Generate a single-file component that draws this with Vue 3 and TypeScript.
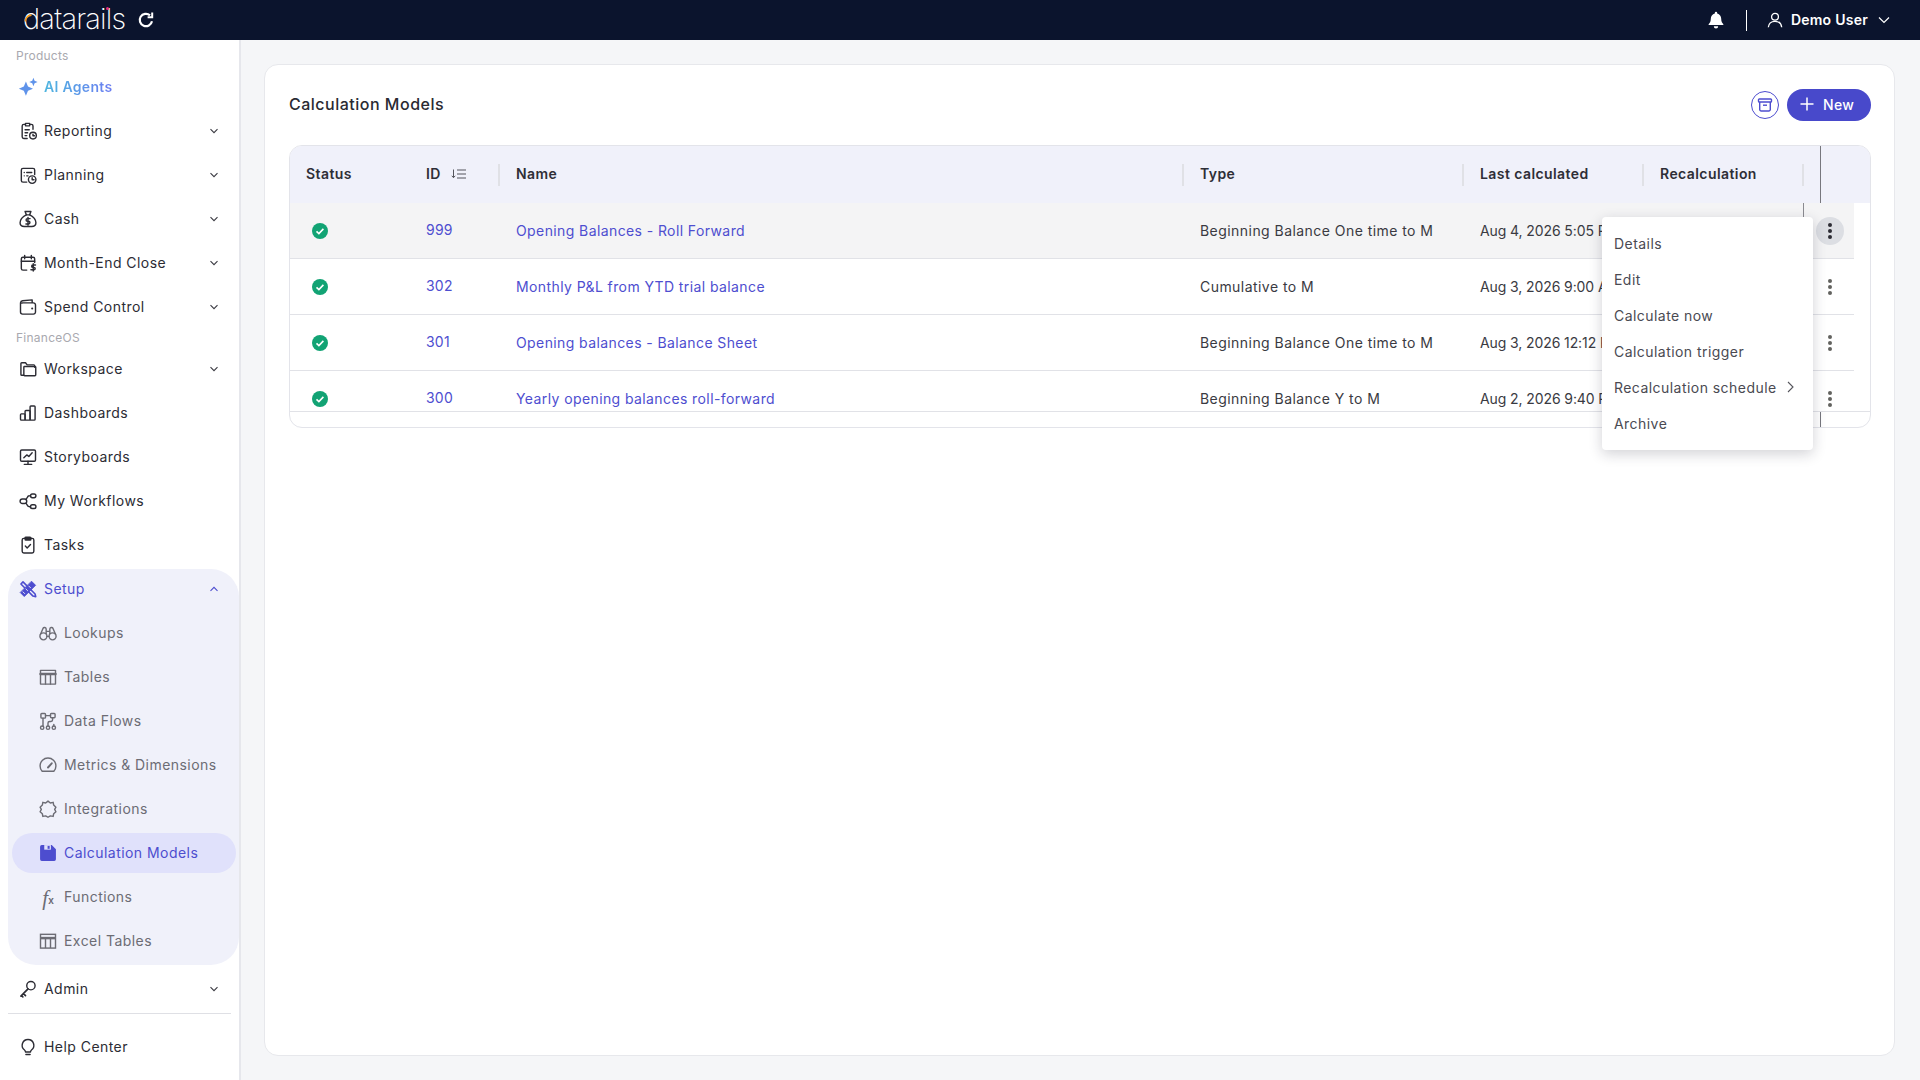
<script setup lang="ts">
interface NavItem {
  label: string;
  icon: string;
  chevron?: boolean;
}

const icons: Record<string, string> = {
  reporting: '<path d="M8 4H7a2 2 0 0 0-2 2v13a2 2 0 0 0 2 2h4"/><path d="M9 2.8h5v3H9z"/><path d="M15 4h1a2 2 0 0 1 2 2v4"/><path d="M8.5 10.5h5M8.5 14h3M8.5 17.5h2"/><circle cx="18" cy="17.5" r="4"/><path d="M18 15.8v1.9h1.8"/>',
  planning: '<path d="M10.500 20.500H6a2 2 0 0 1-2-2V6a2 2 0 0 1 2-2h12a2 2 0 0 1 2 2v5.500"/><path d="M7.500 9h.01M10.500 9h6M7.500 13h.01M10.500 13h1.500"/><circle cx="17" cy="17.500" r="4.500"/><path d="M17 15.200v2.500h2.200"/>',
  cash: '<path d="M8.500 3h7l-1.500 4h-4z"/><path d="M10 7c-4 2-7.500 6-7.500 9.500 0 3 2.500 4.500 5 4.500h9c2.500 0 5-1.500 5-4.500C21.500 13 18 9 14 7"/><path d="M14.500 11.500h-3.200a1.600 1.600 0 0 0 0 3.200h1.400a1.600 1.600 0 0 1 0 3.200H9.500M12 10v9.500"/>',
  close: '<path d="M10.500 20.500H6a2 2 0 0 1-2-2V7a2 2 0 0 1 2-2h12a2 2 0 0 1 2 2v4.500"/><path d="M4 10h16M8 2.800v4M16 2.800v4"/><path d="M21 14.500h-3.200a1.400 1.400 0 0 0 0 2.800h1.400a1.400 1.400 0 0 1 0 2.800H15.500M18.300 13v8.500"/>',
  spend: '<path d="M3 7v11a2.500 2.500 0 0 0 2.500 2.500h13A2.500 2.500 0 0 0 21 18V9.500A2.500 2.500 0 0 0 18.500 7h-13A2.500 2.500 0 0 1 3 7a3 3 0 0 1 2.500-2.500L17 3.500V7"/><path d="M17 13.800h.01" stroke-width="2.500"/>',
  workspace: '<path d="M7 19.500H4.500a1 1 0 0 1-1-1V5.500a1 1 0 0 1 1-1H9l2 2.500h8a1 1 0 0 1 1 1v2"/><path d="M7 11V9.800a.8.8 0 0 1 .8-.8h12.700a.8.8 0 0 1 .8.800V19a1 1 0 0 1-1 1H8a1 1 0 0 1-1-1z"/>',
  dashboards: '<rect x="3" y="13" width="5.500" height="7.500" rx="1"/><rect x="8.500" y="9" width="6" height="11.500" rx="1"/><rect x="14.500" y="3.500" width="6" height="17" rx="1"/>',
  storyboards: '<rect x="3" y="3.500" width="18" height="13.500" rx="1.500"/><path d="M12 17v3.500M7.500 20.800h9"/><path d="M7 13l3.500-3.500 2.500 1.800L17 7"/>',
  workflows: '<rect x="2.500" y="9.500" width="8" height="5.500" rx="2.700"/><rect x="15" y="3.500" width="6.500" height="4.500" rx="2.200"/><rect x="15" y="16.500" width="6.500" height="4.500" rx="2.200"/><path d="M15 5.800h-1.500a2 2 0 0 0-2 1.500l-1.800 2.400M15 18.800h-1.500a2.500 2.500 0 0 1-2-1.300l-1.800-2.700"/>',
  tasks: '<rect x="5" y="4" width="14" height="17.500" rx="2"/><rect x="8.500" y="2.500" width="7" height="3.500" rx="1" fill="currentColor"/><path d="M8.800 13.300l2.200 2.200 4-4.200"/>',
  setup: '<path d="M3.500 6L6 3.500 20.500 18l.8 3.300-3.300-.8z" stroke-width="1.900"/><path d="M16.500 3l4.500 4.500L7.500 21 3 16.500z" fill="currentColor" stroke-width="1.200"/><path d="M6 15.500l2 2M9.500 12l2 2M13 8.500l2 2" stroke="#f0f1fa" stroke-width="1.100"/>',
  lookups: '<circle cx="6.500" cy="16" r="4.200"/><circle cx="17.500" cy="16" r="4.200"/><path d="M10.700 16h2.600M3 13.500L6 6.500a2 2 0 0 1 3.800.8V13M21 13.500l-3-7a2 2 0 0 0-3.800.8V13M9.800 10h4.400"/>',
  tables: '<rect x="3" y="4" width="18" height="16.500"/><path d="M3 8.500h18" stroke-width="3"/><path d="M9 9v11.500M15 9v11.500"/>',
  flows: '<rect x="3.500" y="3" width="5.500" height="5.500" rx="1"/><rect x="15" y="3" width="5.500" height="5" rx="1"/><circle cx="5" cy="20" r="2"/><circle cx="12" cy="20" r="2"/><circle cx="19" cy="20" r="2"/><path d="M6 8.500V18M9 5.500h6M17.500 8v2.500a2 2 0 0 1-2 2h-1.500A2 2 0 0 0 12 14.500V18M19 18v-2"/>',
  metrics: '<path d="M5 19.500a9.500 9.500 0 1 1 14 0z"/><path d="M12 15l4.500-5" stroke-width="2.300"/>',
  integrations: '<path d="M12 2.500l2.800 2.300 3.400-.8.600 3.300 2.700 2.500-1.500 2.700 1.500 2.800-2.700 2.400-.6 3.200-3.400-.6L12 21.900l-2.800-1.600-3.400.6-.6-3.200-2.700-2.400 1.500-2.800-1.500-2.700 2.700-2.500.6-3.300 3.400.8z"/>',
  admin: '<circle cx="15.500" cy="8" r="5"/><path d="M12 11.800L3.500 20.500M6.500 17.500l2.500 2.500M4 20l1.800 1.500" stroke-width="2"/>',
  help: '<path d="M12 3a7 7 0 0 0-4.200 12.600c.8.600 1.200 1.300 1.200 2.400h6c0-1.100.400-1.800 1.200-2.400A7 7 0 0 0 12 3z"/><path d="M9.500 21h5"/>',
};

const products: NavItem[] = [
  { label: "Reporting", icon: "reporting", chevron: true },
  { label: "Planning", icon: "planning", chevron: true },
  { label: "Cash", icon: "cash", chevron: true },
  { label: "Month-End Close", icon: "close", chevron: true },
  { label: "Spend Control", icon: "spend", chevron: true },
];

const finance: NavItem[] = [
  { label: "Workspace", icon: "workspace", chevron: true },
  { label: "Dashboards", icon: "dashboards" },
  { label: "Storyboards", icon: "storyboards" },
  { label: "My Workflows", icon: "workflows" },
  { label: "Tasks", icon: "tasks" },
];

const setupBefore: NavItem[] = [
  { label: "Lookups", icon: "lookups" },
  { label: "Tables", icon: "tables" },
  { label: "Data Flows", icon: "flows" },
  { label: "Metrics & Dimensions", icon: "metrics" },
  { label: "Integrations", icon: "integrations" },
];

const models = [
  { id: 999, name: "Opening Balances - Roll Forward", type: "Beginning Balance One time to M", date: "Aug 4, 2026 5:05 PM" },
  { id: 302, name: "Monthly P&L from YTD trial balance", type: "Cumulative to M", date: "Aug 3, 2026 9:00 AM" },
  { id: 301, name: "Opening balances - Balance Sheet", type: "Beginning Balance One time to M", date: "Aug 3, 2026 12:12 PM" },
  { id: 300, name: "Yearly opening balances roll-forward", type: "Beginning Balance Y to M", date: "Aug 2, 2026 9:40 PM" },
];

const menuItems = ["Details", "Edit", "Calculate now", "Calculation trigger", "Recalculation schedule", "Archive"];
</script>

<template>
  <div class="app">
    <header class="topbar">
      <div class="logo">
        <span class="logo-word">datarails</span>
        <svg class="logo-arc" width="9" height="10" viewBox="0 0 9 10" fill="none">
          <path d="M7.500 1.200A6.500 6.500 0 0 0 1.200 7.500" stroke="#f39a1f" stroke-width="1.700" />
        </svg>
        <span class="logo-dot"></span>
        <svg class="logo-refresh" width="18" height="18" viewBox="0 0 18 18" fill="none" stroke="#fff" stroke-width="2.200">
          <path d="M15 10.300A6.200 6.200 0 1 1 13 4.300" />
          <path d="M15.200 1.600v4.600h-4.600" stroke-width="2" />
        </svg>
      </div>
      <div class="top-right">
        <svg class="bell" width="16" height="18" viewBox="0 0 16 18" fill="#fff">
          <path d="M8 0.800a1.200 1.200 0 0 1 1.200 1.200v.5c2.500.6 4 2.700 4 5.200 0 2.800.8 4 2 5.200.4.400.2 1.100-.5 1.100H1.300c-.7 0-.9-.7-.5-1.100 1.200-1.200 2-2.400 2-5.200 0-2.500 1.500-4.600 4-5.200V2A1.200 1.200 0 0 1 8 .8z" />
          <path d="M5.800 15.200h4.400a2.200 2.200 0 0 1-4.400 0z" />
        </svg>
        <span class="top-divider"></span>
        <svg width="16" height="16" viewBox="0 0 16 16" fill="none" stroke="#fff" stroke-width="1.300">
          <circle cx="8" cy="4.800" r="3.400" />
          <path d="M1.300 15.300c.4-3.800 3.100-6 6.700-6s6.300 2.200 6.700 6" />
        </svg>
        <span class="user-name">Demo User</span>
        <svg width="12" height="8" viewBox="0 0 12 8" fill="none" stroke="#fff" stroke-width="1.200">
          <path d="M1 1.500l5 5 5-5" />
        </svg>
      </div>
    </header>

    <div class="body">
      <aside class="sidebar">
        <div class="section-label first">Products</div>
        <a class="nav-row ai">
          <svg class="nav-icon" viewBox="0 0 24 24" fill="#5f93ea">
            <path d="M9.500 5.500l2.500 6 6 2.500-6 2.500-2.500 6-2.500-6-6-2.500 6-2.500z" />
            <path d="M18.500 1l1.400 3.600 3.600 1.400-3.600 1.400-1.400 3.600-1.400-3.600-3.600-1.400 3.600-1.400z" />
          </svg>
          <span class="ai-text">AI Agents</span>
        </a>
        <a v-for="item in products" :key="item.label" class="nav-row">
          <svg class="nav-icon" viewBox="0 0 24 24" fill="none" stroke="currentColor" stroke-width="1.700" stroke-linecap="round" stroke-linejoin="round" v-html="icons[item.icon]"></svg>
          <span class="nav-text">{{ item.label }}</span>
          <svg v-if="item.chevron" class="chev" width="10" height="6" viewBox="0 0 10 6" fill="none" stroke="currentColor" stroke-width="1.100"><path d="M1.500 1.200L5 4.700l3.500-3.500" /></svg>
        </a>

        <div class="section-label">FinanceOS</div>
        <a v-for="item in finance" :key="item.label" class="nav-row">
          <svg class="nav-icon" viewBox="0 0 24 24" fill="none" stroke="currentColor" stroke-width="1.700" stroke-linecap="round" stroke-linejoin="round" v-html="icons[item.icon]"></svg>
          <span class="nav-text">{{ item.label }}</span>
          <svg v-if="item.chevron" class="chev" width="10" height="6" viewBox="0 0 10 6" fill="none" stroke="currentColor" stroke-width="1.100"><path d="M1.500 1.200L5 4.700l3.500-3.500" /></svg>
        </a>

        <div class="setup-group">
          <a class="nav-row setup-head">
            <svg class="nav-icon" viewBox="0 0 24 24" fill="none" stroke="currentColor" stroke-width="1.700" stroke-linecap="round" stroke-linejoin="round" v-html="icons.setup"></svg>
            <span class="nav-text">Setup</span>
            <svg class="chev" width="10" height="6" viewBox="0 0 10 6" fill="none" stroke="currentColor" stroke-width="1.100"><path d="M1.500 4.800L5 1.300l3.500 3.500" /></svg>
          </a>
          <a v-for="item in setupBefore" :key="item.label" class="nav-row sub">
            <svg class="nav-icon" viewBox="0 0 24 24" fill="none" stroke="currentColor" stroke-width="1.700" stroke-linecap="round" stroke-linejoin="round" v-html="icons[item.icon]"></svg>
            <span class="nav-text">{{ item.label }}</span>
          </a>
          <a class="nav-row sub active">
            <svg class="nav-icon" viewBox="0 0 24 24" fill="currentColor">
              <path d="M4.500 2.500h12l5 5v12a2 2 0 0 1-2 2h-15a2 2 0 0 1-2-2v-15a2 2 0 0 1 2-2z" />
              <path d="M7.500 2.500h8v5.500h-8z" fill="#e0e1fb" />
              <path d="M11.500 3.500h2.500v3.500h-2.500z" />
            </svg>
            <span class="nav-text">Calculation Models</span>
          </a>
          <a class="nav-row sub">
            <span class="fx-icon"><i>f</i><b>x</b></span>
            <span class="nav-text">Functions</span>
          </a>
          <a class="nav-row sub">
            <svg class="nav-icon" viewBox="0 0 24 24" fill="none" stroke="currentColor" stroke-width="1.700" v-html="icons.tables"></svg>
            <span class="nav-text">Excel Tables</span>
          </a>
        </div>

        <a class="nav-row admin">
          <svg class="nav-icon" viewBox="0 0 24 24" fill="none" stroke="currentColor" stroke-width="1.700" stroke-linecap="round" stroke-linejoin="round" v-html="icons.admin"></svg>
          <span class="nav-text">Admin</span>
          <svg class="chev" width="10" height="6" viewBox="0 0 10 6" fill="none" stroke="currentColor" stroke-width="1.100"><path d="M1.500 1.200L5 4.700l3.500-3.500" /></svg>
        </a>
        <div class="side-rule"></div>
        <a class="nav-row">
          <svg class="nav-icon" viewBox="0 0 24 24" fill="none" stroke="currentColor" stroke-width="1.700" stroke-linecap="round" stroke-linejoin="round" v-html="icons.help"></svg>
          <span class="nav-text">Help Center</span>
        </a>
      </aside>

      <main class="main">
        <section class="card">
          <div class="card-head">
            <h1>Calculation Models</h1>
            <div class="actions">
              <button class="archive-btn">
                <svg width="16" height="16" viewBox="0 0 16 16" fill="none" stroke="#4c4ccf" stroke-width="1.400" stroke-linejoin="round">
                  <rect x="1.500" y="2" width="13" height="3" rx="0.800" />
                  <path d="M2.700 5v7.500a1.500 1.500 0 0 0 1.500 1.500h7.600a1.500 1.500 0 0 0 1.500-1.500V5" />
                  <path d="M6 8.200h4" />
                </svg>
              </button>
              <button class="new-btn">
                <svg width="14" height="14" viewBox="0 0 14 14" fill="none" stroke="#fff" stroke-width="1.500"><path d="M7 0.500v13M0.500 7h13" /></svg>
                New
              </button>
            </div>
          </div>

          <div class="table">
            <div class="grid-row head">
              <div class="th">Status</div>
              <div class="th sep">
                ID
                <svg class="sort" width="15" height="10" viewBox="0 0 15 10" fill="none" stroke="#55555c" stroke-width="1">
                  <path d="M2.500 0.500v8M0.800 6.800l1.700 1.900 1.700-1.900" />
                  <path d="M6 1h9M6 5h9M6 9h9" />
                </svg>
              </div>
              <div class="th sep">Name</div>
              <div class="th sep">Type</div>
              <div class="th sep">Last calculated</div>
              <div class="th sep">Recalculation</div>
              <div class="th-end"></div>
            </div>

            <div class="rows">
              <div v-for="(row, i) in models" :key="row.id" class="grid-row row" :class="{ hover: i === 0 }">
                <div class="td status">
                  <svg width="16" height="16" viewBox="0 0 16 16">
                    <circle cx="8" cy="8" r="8" fill="#12a374" />
                    <path d="M4.500 8.300l2.400 2.300 4.500-4.700" fill="none" stroke="#fff" stroke-width="1.600" />
                  </svg>
                </div>
                <div class="td link id">{{ row.id }}</div>
                <div class="td link">{{ row.name }}</div>
                <div class="td">{{ row.type }}</div>
                <div class="td date">{{ row.date }}</div>
                <div class="td recalc"></div>
                <div class="td kebab">
                  <span class="dots" :class="{ open: i === 0 }"><i></i><i></i><i></i></span>
                </div>
              </div>
            </div>

            <div class="scroll-strip"><span></span></div>
          </div>

          <ul class="menu">
            <li v-for="item in menuItems" :key="item">
              {{ item }}
              <svg v-if="item === 'Recalculation schedule'" width="7" height="12" viewBox="0 0 7 12" fill="none" stroke="#55555c" stroke-width="1.100"><path d="M1 1l5 5-5 5" /></svg>
            </li>
          </ul>
        </section>
      </main>
    </div>
  </div>
</template>

<style>
html, body {
  margin: 0;
  background: #f5f6f8;
}
</style>

<style scoped>
.app {
  width: 1920px;
  height: 1080px;
  display: flex;
  flex-direction: column;
  overflow: hidden;
  font-family: Inter, "Noto Sans", sans-serif;
  font-size: 14px;
  letter-spacing: 0.45px;
  color: #2c2c34;
}

.topbar {
  height: 40px;
  flex: none;
  background: #0b142d;
  display: flex;
  align-items: center;
  justify-content: space-between;
  padding: 0 30px 0 23px;
  color: #fff;
}
.logo {
  position: relative;
  display: flex;
  align-items: center;
}
.logo-word {
  font-weight: 200;
  font-size: 29px;
  letter-spacing: -0.8px;
  line-height: 40px;
  width: 107px;
  margin-top: -2px;
}
.logo-arc {
  position: absolute;
  left: 1px;
  top: 13px;
}
.logo-dot {
  position: absolute;
  left: 83px;
  top: 6px;
  width: 3px;
  height: 3px;
  border-radius: 50%;
  background: #e6287c;
}
.logo-refresh {
  margin-left: 7px;
}
.top-right {
  display: flex;
  align-items: center;
}
.top-divider {
  width: 1px;
  height: 21px;
  background: #fff;
  margin: 0 20px 0 22px;
}
.user-name {
  font-weight: 600;
  font-size: 14px;
  letter-spacing: 0.25px;
  margin: 0 10px 1px 8px;
}

.body {
  flex: 1;
  display: flex;
  min-height: 0;
}

.sidebar {
  width: 239px;
  flex: none;
  box-sizing: content-box;
  background: #fff;
  border-right: 2px solid #e6e7ec;
  padding-top: 4px;
}
.section-label {
  height: 18px;
  line-height: 18px;
  padding-left: 16px;
  font-size: 12px;
  letter-spacing: 0.25px;
  color: #a9a9af;
}
.section-label.first {
  height: 21px;
  line-height: 23px;
}
.nav-row {
  height: 44px;
  display: flex;
  align-items: center;
  padding-left: 20px;
  color: #2c2c34;
}
.nav-icon {
  width: 20px;
  height: 20px;
  flex: none;
  overflow: visible;
  margin-left: -2px;
}
.nav-text {
  margin: 0 0 1px 6px;
  flex: 1;
}
.chev {
  margin-right: 20px;
  color: #3a3a42;
}
.ai .ai-text {
  margin: 0 0 1px 6px;
  font-weight: 600;
  letter-spacing: 0.3px;
  background: linear-gradient(90deg, #4fb6df, #6b7df2);
  -webkit-background-clip: text;
  background-clip: text;
  color: transparent;
}
.setup-group {
  margin: 2px 0 2px 8px;
  padding-bottom: 2px;
  background: #f0f1fa;
  border-radius: 28px;
}
.setup-head {
  height: 40px;
  margin-bottom: 2px;
  padding-left: 12px;
  color: #4d4dcf;
}
.setup-head .chev {
  color: #4d4dcf;
  margin-right: 20px;
}
.nav-row.sub {
  padding-left: 32px;
  color: #6c6c74;
}
.nav-row.active {
  position: relative;
  color: #4d4dcf;
}
.nav-row.active::before {
  content: "";
  position: absolute;
  left: 4px;
  right: 3px;
  top: 2px;
  bottom: 2px;
  border-radius: 20px;
  background: #e0e1fb;
}
.nav-row.active > * {
  position: relative;
}
.fx-icon {
  width: 18px;
  height: 20px;
  margin: 0 0 0 -1px;
  display: flex;
  align-items: flex-end;
  justify-content: center;
  font-family: "Liberation Serif", serif;
  line-height: 18px;
  letter-spacing: 0;
}
.fx-icon i {
  font-size: 21px;
}
.fx-icon b {
  font-size: 10px;
  line-height: 13px;
  font-family: "Liberation Sans", sans-serif;
}
.fx-icon + .nav-text {
  margin-left: 7px;
}
.side-rule {
  height: 1px;
  margin: 2px 8px 11px;
  background: #dfe0e5;
}

.main {
  flex: 1;
  min-width: 0;
  padding: 24px 25px 24px 23px;
  display: flex;
}
.card {
  position: relative;
  flex: 1;
  box-sizing: border-box;
  background: #fff;
  border: 1px solid #e7e8ec;
  border-radius: 14px;
  padding: 24px 23px 24px 24px;
}
.card-head {
  display: flex;
  align-items: center;
  justify-content: space-between;
  height: 32px;
  margin-bottom: 24px;
}
.card-head h1 {
  margin: 0 0 2px;
  font-size: 16px;
  font-weight: 500;
  letter-spacing: 0.5px;
  color: #2a2a32;
}
.actions {
  display: flex;
  align-items: center;
  gap: 8px;
}
.archive-btn {
  width: 28px;
  height: 28px;
  padding: 0;
  display: flex;
  align-items: center;
  justify-content: center;
  background: #fff;
  border: 1px solid #4c4ccf;
  border-radius: 50%;
}
.new-btn {
  width: 84px;
  height: 32px;
  padding: 0 0 2px 13px;
  display: flex;
  align-items: center;
  gap: 9px;
  background: #4849cb;
  border: 0;
  border-radius: 16px;
  color: #fff;
  font-family: inherit;
  font-size: 14px;
  font-weight: 500;
  letter-spacing: 0.3px;
}

.table {
  border: 1px solid #e3e4ea;
  border-radius: 13px;
  overflow: hidden;
  height: 283px;
  box-sizing: border-box;
}
.grid-row {
  display: grid;
  grid-template-columns: 120px 90px 684px 280px 180px 160px 50px;
}
.head {
  height: 57px;
  background: #f0f1fa;
  grid-template-columns: 120px 90px 684px 280px 180px 160px 1fr;
}
.th {
  position: relative;
  display: flex;
  align-items: center;
  padding: 0 0 2px 16px;
  font-weight: 600;
  font-size: 14px;
  letter-spacing: 0.42px;
  color: #2e2e36;
}
.th.sep::after {
  content: "";
  position: absolute;
  right: 0;
  top: 18px;
  width: 2px;
  height: 22px;
  background: #e0e1e6;
}
.sort {
  margin-left: 10px;
}
.th-end {
  margin-left: 16px;
  border-left: 1px solid #77777d;
}
.rows {
  height: 208px;
  overflow: hidden;
  border-bottom: 1px solid #e1e2e7;
  box-sizing: content-box;
}
.row {
  width: 1564px;
  height: 56px;
  box-sizing: border-box;
  border-bottom: 1px solid #e1e2e7;
}
.row.hover {
  background: #f4f4f5;
}
.td {
  display: flex;
  align-items: center;
  padding-left: 16px;
  white-space: nowrap;
  overflow: hidden;
  color: #3a3a42;
}
.status {
  padding-left: 22px;
}
.link {
  color: #4e4ed0;
  letter-spacing: 0.4px;
}
.id {
  padding-bottom: 2px;
  letter-spacing: 0.2px;
}
.date {
  letter-spacing: -0.1px;
}
.recalc {
  border-right: 1px solid #8a8a90;
}
.kebab {
  padding: 0 0 0 1px;
  justify-content: center;
  overflow: visible;
}
.dots {
  width: 28px;
  height: 28px;
  border-radius: 50%;
  display: flex;
  flex-direction: column;
  align-items: center;
  justify-content: center;
  gap: 2px;
}
.dots.open {
  background: #dcdee3;
}
.dots i {
  width: 4px;
  height: 4px;
  border-radius: 50%;
  background: #62625f;
}
.dots.open i {
  background: #2c2c34;
}
.scroll-strip {
  height: 16px;
  padding-left: 1530px;
}
.scroll-strip span {
  display: block;
  width: 1px;
  height: 100%;
  background: #77777d;
}

.menu {
  position: absolute;
  left: 1337px;
  top: 152px;
  width: 211px;
  height: 233px;
  box-sizing: border-box;
  margin: 0;
  padding: 8px 0;
  list-style: none;
  background: #fff;
  border-radius: 4px;
  box-shadow: 0 4px 14px rgba(30, 30, 50, 0.2);
}
.menu li {
  height: 36px;
  display: flex;
  align-items: center;
  gap: 10px;
  padding-left: 12px;
  color: #4a4a52;
}
</style>
